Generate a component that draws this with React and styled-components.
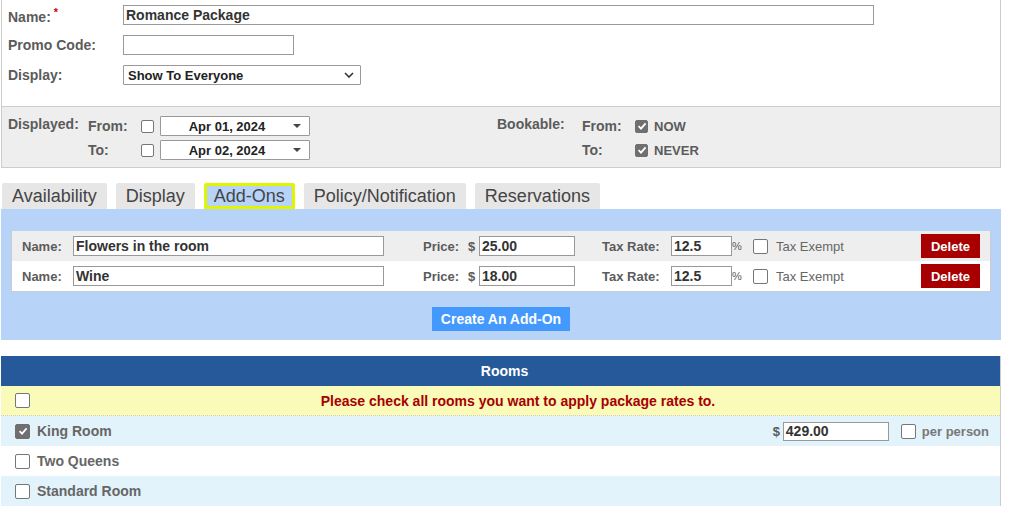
import React from 'react'
import styled, { createGlobalStyle } from 'styled-components'

const colors = {
  label: '#5b5b5b',
  text: '#333',
  border: '#ccc',
  inputBorder: '#999',
  gray: '#eee',
  panelBlue: '#b8d3f8',
  navy: '#26599a',
  red: '#a80000',
  yellow: '#fafab9',
  rowBlue: '#e2f3fb',
}

const GlobalStyle = createGlobalStyle`
  body {
    margin: 0;
    background: #fff;
    font-family: "Liberation Sans", Arial, sans-serif;
    color: ${colors.text};
  }
`

const Page = styled.div`
  width: 1000px;
  margin-left: 1px;
`

const FormBox = styled.div`
  border-left: 1px solid ${colors.border};
  border-right: 1px solid ${colors.border};
  padding: 0 0 16px 6px;
`

const FieldRow = styled.div`
  display: flex;
  align-items: center;
  height: 30px;
`

const Label = styled.span`
  font-size: ${p => p.size || 14}px;
  font-weight: ${p => (p.light ? 'normal' : 'bold')};
  color: ${p => p.tone || colors.label};
  width: ${p => (p.w ? `${p.w}px` : 'auto')};
  flex: none;
`

const Star = styled.sup`
  color: #c00;
  font-size: 11px;
  margin-left: 3px;
`

const TextInput = styled.div`
  box-sizing: border-box;
  width: ${p => p.w}px;
  height: ${p => p.h || 20}px;
  border: 1px solid ${colors.inputBorder};
  background: #fff;
  font-size: ${p => p.size || 14}px;
  font-weight: bold;
  color: ${colors.text};
  padding: 0 2px;
  display: flex;
  align-items: center;
  flex: none;
`

const SelectBox = styled.div`
  box-sizing: border-box;
  width: ${p => p.w}px;
  height: 20px;
  border: 1px solid ${colors.inputBorder};
  border-radius: 1px;
  background: #fff;
  font-size: 13px;
  font-weight: bold;
  color: #222;
  display: flex;
  align-items: center;
  justify-content: ${p => (p.center ? 'center' : 'flex-start')};
  padding: 0 ${p => (p.center ? 20 : 4)}px 0 4px;
  position: relative;
  flex: none;

  svg {
    position: absolute;
    right: ${p => (p.center ? 8 : 6)}px;
    top: 50%;
    transform: translateY(-50%);
  }
`

const DatesBox = styled.div`
  background: ${colors.gray};
  border: 1px solid ${colors.border};
  display: grid;
  grid-template-columns: 489px 1fr;
  padding: 7px 0 5px 6px;
`

const DateGroup = styled.div`
  display: grid;
  grid-template-columns: ${p => p.cols};
  grid-auto-rows: 24px;
  align-items: center;
`

const GroupTitle = styled(Label)`
  align-self: start;
  padding-top: 2px;
`

const CheckLine = styled.div`
  display: flex;
  align-items: center;
  gap: ${p => p.gap || 7}px;
`

const BoxMark = styled.span`
  box-sizing: border-box;
  display: inline-flex;
  align-items: center;
  justify-content: center;
  width: ${p => p.s || 13}px;
  height: ${p => p.s || 13}px;
  border-radius: 2px;
  border: 1px solid ${p => (p.checked ? '#6f6f6f' : '#767676')};
  background: ${p => (p.checked ? '#6f6f6f' : '#fff')};
  flex: none;
`

const Checkbox = ({ checked, s }) => (
  <BoxMark checked={checked} s={s}>
    {checked && (
      <svg width="10" height="10" viewBox="0 0 10 10">
        <path d="M1.6 5.2 L4 7.6 L8.6 2.4" stroke="#fff" strokeWidth="1.8" fill="none" />
      </svg>
    )}
  </BoxMark>
)

const Caret = () => (
  <svg width="8" height="4" viewBox="0 0 8 4">
    <path d="M0 0 H8 L4 4 Z" fill="#444" />
  </svg>
)

const Chevron = () => (
  <svg width="10" height="6" viewBox="0 0 10 6">
    <path d="M1 1 L5 5 L9 1" stroke="#333" strokeWidth="1.6" fill="none" />
  </svg>
)

const Tabs = styled.div`
  display: flex;
  gap: 9px;
  margin-top: 15px;
  padding-left: 1px;
`

const Tab = styled.div`
  box-sizing: border-box;
  height: 26px;
  padding: 0 ${p => (p.active ? 7 : 10)}px;
  font-size: 18px;
  line-height: 20px;
  color: #444;
  background: ${p => (p.active ? colors.panelBlue : '#e6e6e6')};
  border: ${p => (p.active ? '3px solid #e2f500' : 'none')};
  border-radius: 2px 2px 0 0;
  display: flex;
  align-items: center;
`

const Panel = styled.div`
  background: ${colors.panelBlue};
  padding: 22px 10px 9px;
  display: flex;
  flex-direction: column;
  align-items: center;
`

const AddOnTable = styled.div`
  align-self: stretch;
  border: 1px solid ${colors.border};
  border-top: none;
`

const AddOnRow = styled.div`
  display: flex;
  align-items: center;
  height: 30px;
  background: ${p => (p.shade ? colors.gray : '#fff')};
  padding-left: 10px;
`

const Spacer = styled.span`
  width: ${p => p.w}px;
  flex: none;
`

const DeleteButton = styled.button`
  margin-left: auto;
  margin-right: 10px;
  width: 59px;
  height: 24px;
  border: none;
  background: ${colors.red};
  color: #fff;
  font-family: inherit;
  font-size: 13px;
  font-weight: bold;
  padding: 0;
`

const CreateButton = styled.button`
  margin-top: 15px;
  height: 24px;
  padding: 0 9px;
  border: none;
  background: #4499ff;
  color: #fff;
  font-family: inherit;
  font-size: 14px;
  font-weight: bold;
`

const Rooms = styled.div`
  margin-top: 16px;
  border-right: 1px solid ${colors.border};
`

const RoomsHeader = styled.div`
  height: 30px;
  background: ${colors.navy};
  color: #fff;
  font-size: 14px;
  font-weight: bold;
  display: flex;
  align-items: center;
  justify-content: center;
  padding-left: 8px;
`

const NoticeRow = styled.div`
  height: 30px;
  box-sizing: border-box;
  background: ${colors.yellow};
  border-bottom: 1px dotted #ccc;
  display: grid;
  grid-template-columns: 21px 1fr;
  align-items: center;
  padding-left: 14px;
`

const Notice = styled.span`
  text-align: center;
  color: ${colors.red};
  font-size: 14px;
  font-weight: bold;
`

const RoomRow = styled.div`
  height: 30px;
  display: flex;
  align-items: center;
  padding: 0 11px 0 14px;
  background: ${p => (p.shade ? colors.rowBlue : '#fff')};
`

const RoomName = styled(Label)`
  color: #666;
  margin-left: 7px;
`

const RateGroup = styled.div`
  margin-left: auto;
  display: flex;
  align-items: center;
`

const addOns = [
  { name: 'Flowers in the room', price: '25.00' },
  { name: 'Wine', price: '18.00' },
]

const rooms = [
  { name: 'King Room', checked: true, rate: '429.00' },
  { name: 'Two Queens' },
  { name: 'Standard Room' },
]

const tabs = ['Availability', 'Display', 'Add-Ons', 'Policy/Notification', 'Reservations']

export default function App() {
  return (
    <Page>
      <GlobalStyle />
      <FormBox>
        <FieldRow>
          <Label w={115}>Name:<Star>*</Star></Label>
          <TextInput w={751}>Romance Package</TextInput>
        </FieldRow>
        <FieldRow>
          <Label w={115}>Promo Code:</Label>
          <TextInput w={171} />
        </FieldRow>
        <FieldRow>
          <Label w={115}>Display:</Label>
          <SelectBox w={238}>
            Show To Everyone
            <Chevron />
          </SelectBox>
        </FieldRow>
      </FormBox>

      <DatesBox>
        <DateGroup cols="80px 53px 19px 150px">
          <GroupTitle>Displayed:</GroupTitle>
          <Label>From:</Label>
          <Checkbox />
          <SelectBox w={150} center>
            Apr 01, 2024
            <Caret />
          </SelectBox>
          <span />
          <Label>To:</Label>
          <Checkbox />
          <SelectBox w={150} center>
            Apr 02, 2024
            <Caret />
          </SelectBox>
        </DateGroup>
        <DateGroup cols="85px 53px 1fr">
          <GroupTitle>Bookable:</GroupTitle>
          <Label>From:</Label>
          <CheckLine gap={6}>
            <Checkbox checked />
            <Label size={13}>NOW</Label>
          </CheckLine>
          <span />
          <Label>To:</Label>
          <CheckLine gap={6}>
            <Checkbox checked />
            <Label size={13}>NEVER</Label>
          </CheckLine>
        </DateGroup>
      </DatesBox>

      <Tabs>
        {tabs.map(t => (
          <Tab key={t} active={t === 'Add-Ons'}>{t}</Tab>
        ))}
      </Tabs>

      <Panel>
        <AddOnTable>
          {addOns.map((a, i) => (
            <AddOnRow key={a.name} shade={i === 0}>
              <Label size={13} w={51}>Name:</Label>
              <TextInput w={311}>{a.name}</TextInput>
              <Spacer w={39} />
              <Label size={13} w={45}>Price:</Label>
              <Label size={13} w={11}>$</Label>
              <TextInput w={96}>{a.price}</TextInput>
              <Spacer w={27} />
              <Label size={13} w={69}>Tax Rate:</Label>
              <TextInput w={61}>12.5</TextInput>
              <Label size={11} light w={21}>%</Label>
              <Checkbox s={15} />
              <Spacer w={8} />
              <Label size={13} light tone="#666">Tax Exempt</Label>
              <DeleteButton>Delete</DeleteButton>
            </AddOnRow>
          ))}
        </AddOnTable>
        <CreateButton>Create An Add-On</CreateButton>
      </Panel>

      <Rooms>
        <RoomsHeader>Rooms</RoomsHeader>
        <NoticeRow>
          <Checkbox s={15} />
          <Notice>Please check all rooms you want to apply package rates to.</Notice>
        </NoticeRow>
        {rooms.map((r, i) => (
          <RoomRow key={r.name} shade={i % 2 === 0}>
            <Checkbox checked={r.checked} s={15} />
            <RoomName>{r.name}</RoomName>
            {r.rate && (
              <RateGroup>
                <Label size={13} w={10}>$</Label>
                <TextInput w={106} h={19}>{r.rate}</TextInput>
                <Spacer w={12} />
                <Checkbox s={15} />
                <Spacer w={6} />
                <Label size={13} tone="#777">per person</Label>
              </RateGroup>
            )}
          </RoomRow>
        ))}
      </Rooms>
    </Page>
  )
}
